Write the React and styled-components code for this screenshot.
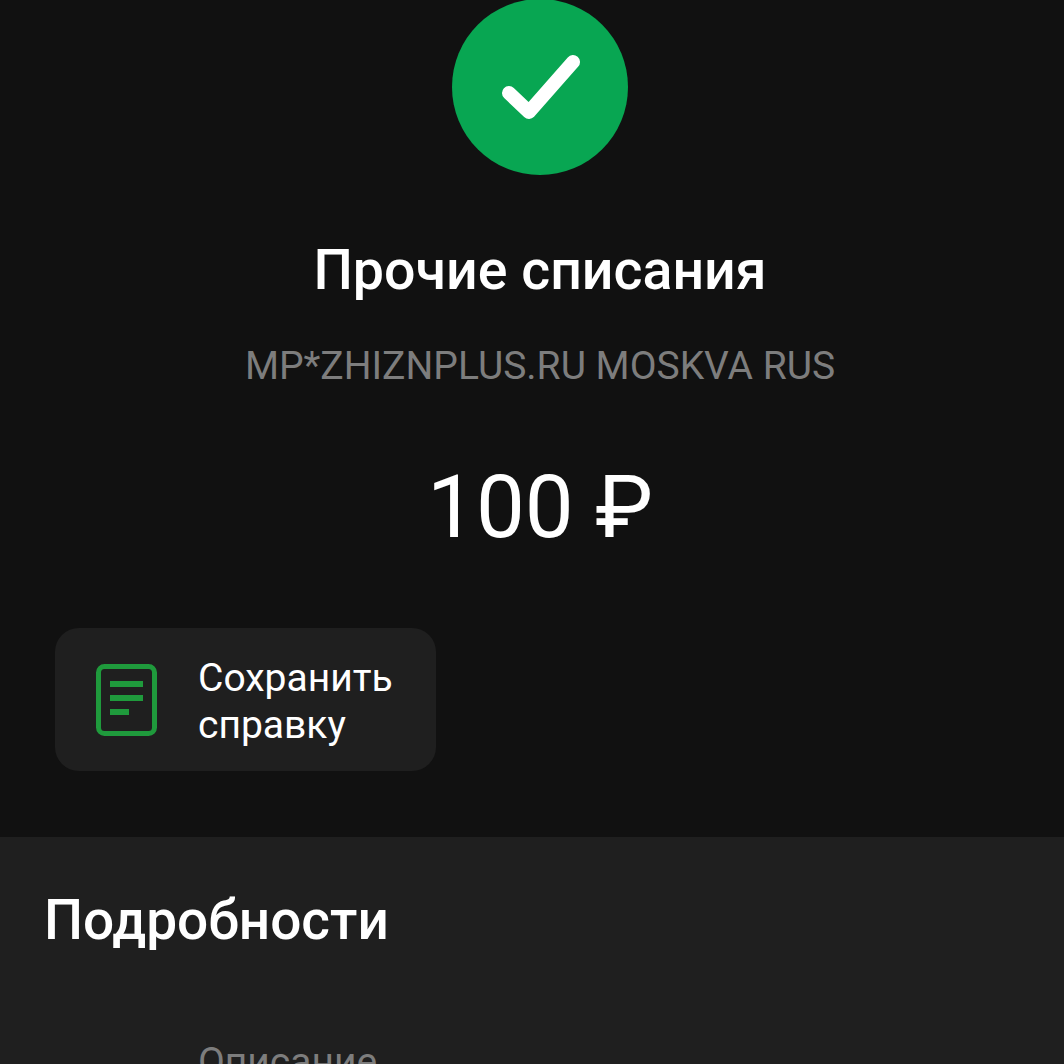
import React from 'react';
import styled, { createGlobalStyle } from 'styled-components';

const GlobalStyle = createGlobalStyle`
  html, body {
    margin: 0;
    padding: 0;
    background: #111111;
    overflow: hidden;
  }
`;

const Page = styled.div`
  width: 1064px;
  height: 1064px;
  overflow: hidden;
  background: #111111;
  color: #ffffff;
  font-family: Roboto, "Noto Sans", sans-serif;
`;

const Top = styled.section`
  height: 837px;
  box-sizing: border-box;
  padding-left: 16px;
  display: flex;
  flex-direction: column;
  align-items: center;
`;

const StatusCircle = styled.div`
  width: 176px;
  height: 176px;
  margin-top: -1px;
  border-radius: 50%;
  background: #08a652;
  display: flex;
  align-items: center;
  justify-content: center;
`;

const Title = styled.h1`
  margin: 66px 0 0;
  font-size: 55.5px;
  line-height: 60px;
  font-weight: 500;
`;

const Merchant = styled.div`
  margin-top: 42px;
  font-size: 39px;
  line-height: 46px;
  color: #7d7d7d;
`;

const Amount = styled.div`
  margin-top: 68px;
  font-size: 87px;
  line-height: 100px;
  font-weight: 400;
`;

const Actions = styled.div`
  align-self: stretch;
  margin-top: 71px;
  padding-left: 39px;
  display: flex;
`;

const SaveButton = styled.button`
  width: 381px;
  height: 143px;
  box-sizing: border-box;
  padding: 0 0 0 41px;
  border: 0;
  border-radius: 24px;
  background: #1f1f1f;
  color: #ffffff;
  font-family: inherit;
  font-size: 39px;
  line-height: 47px;
  text-align: left;
  display: flex;
  align-items: center;
  gap: 41px;
`;

const SaveLabel = styled.span`
  padding-top: 4px;
`;

const Details = styled.section`
  height: 227px;
  background: #1f1f1f;
  padding: 50px 0 0 44px;
  box-sizing: border-box;
`;

const DetailsTitle = styled.h2`
  margin: 0;
  font-size: 55px;
  line-height: 66px;
  font-weight: 500;
`;

const FieldLabel = styled.div`
  margin: 87px 0 0 154px;
  font-size: 39px;
  line-height: 44px;
  color: #7d7d7d;
`;

const CheckIcon = () => (
  <svg width="80" height="66" viewBox="0 0 80 66" fill="none">
    <path d="M9 39 L29 58 L73 8" stroke="#ffffff" strokeWidth="14" strokeLinecap="round" strokeLinejoin="round" />
  </svg>
);

const DocIcon = () => (
  <svg width="61" height="72" viewBox="0 0 61 72" fill="none">
    <rect x="2.5" y="2.5" width="56" height="67" rx="6" stroke="#1f9a3c" strokeWidth="5" />
    <path d="M14 20 H47 M14 34 H47 M14 48 H33" stroke="#1f9a3c" strokeWidth="6" />
  </svg>
);

export default function App() {
  return (
    <Page>
      <GlobalStyle />
      <Top>
        <StatusCircle>
          <CheckIcon />
        </StatusCircle>
        <Title>Прочие списания</Title>
        <Merchant>MP*ZHIZNPLUS.RU MOSKVA RUS</Merchant>
        <Amount>100 ₽</Amount>
        <Actions>
          <SaveButton>
            <DocIcon />
            <SaveLabel>Сохранить<br />справку</SaveLabel>
          </SaveButton>
        </Actions>
      </Top>
      <Details>
        <DetailsTitle>Подробности</DetailsTitle>
        <FieldLabel>Описание</FieldLabel>
      </Details>
    </Page>
  );
}
